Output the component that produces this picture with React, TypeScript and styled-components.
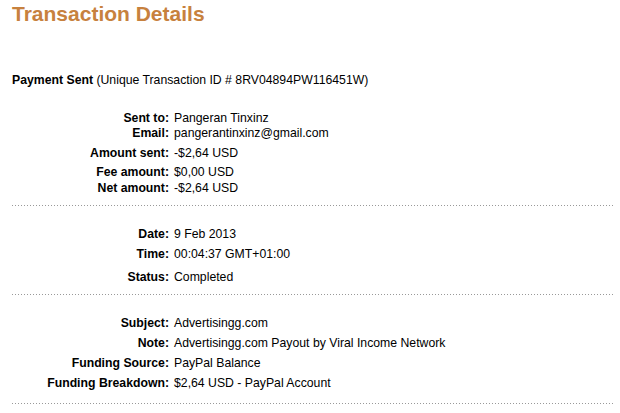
import React from "react";
import styled, { createGlobalStyle } from "styled-components";

const Global = createGlobalStyle`
  body {
    margin: 0;
    background: #fff;
    font-family: "Liberation Sans", Arial, sans-serif;
    font-size: 12.25px;
    color: #000;
  }
`;

const Page = styled.div`
  width: 620px;
  height: 413px;
  padding: 2px 6px 0 12px;
  box-sizing: border-box;
  overflow: hidden;
`;

const Title = styled.h1`
  margin: 0;
  font-size: 21px;
  line-height: 24px;
  font-weight: bold;
  color: #c7813e;
`;

const Summary = styled.div`
  margin-top: 47px;
  line-height: 15px;
`;

const Section = styled.div`
  display: grid;
  grid-template-columns: 157px 1fr;
  column-gap: 5px;
  padding-top: ${(p: { top: number }) => p.top}px;
`;

const Label = styled.div<{ gap?: number }>`
  text-align: right;
  font-weight: bold;
  line-height: 15px;
  margin-top: ${(p) => p.gap ?? 0}px;
`;

const Value = styled.div<{ gap?: number }>`
  line-height: 15px;
  margin-top: ${(p) => p.gap ?? 0}px;
`;

const Divider = styled.div`
  height: 1px;
  margin-top: ${(p: { top: number }) => p.top}px;
  background-image: linear-gradient(to right, #999 1px, transparent 1px);
  background-size: 3px 1px;
`;

type Row = [string, string, number];

const Rows = ({ rows }: { rows: Row[] }) => (
  <>
    {rows.map(([l, v, g]) => (
      <React.Fragment key={l}>
        <Label gap={g}>{l}</Label>
        <Value gap={g}>{v}</Value>
      </React.Fragment>
    ))}
  </>
);

export default function App() {
  return (
    <>
      <Global />
      <Page>
        <Title>Transaction Details</Title>
        <Summary>
          <b>Payment Sent</b> (Unique Transaction ID # 8RV04894PW116451W)
        </Summary>
        <Section top={23}>
          <Rows
            rows={[
              ["Sent to:", "Pangeran Tinxinz", 0],
              ["Email:", "pangerantinxinz@gmail.com", 0],
              ["Amount sent:", "-$2,64 USD", 5],
              ["Fee amount:", "$0,00 USD", 4],
              ["Net amount:", "-$2,64 USD", 1],
            ]}
          />
        </Section>
        <Divider top={9} />
        <Section top={21}>
          <Rows
            rows={[
              ["Date:", "9 Feb 2013", 0],
              ["Time:", "00:04:37 GMT+01:00", 5],
              ["Status:", "Completed", 8],
            ]}
          />
        </Section>
        <Divider top={9} />
        <Section top={21}>
          <Rows
            rows={[
              ["Subject:", "Advertisingg.com", 0],
              ["Note:", "Advertisingg.com Payout by Viral Income Network", 5],
              ["Funding Source:", "PayPal Balance", 5],
              ["Funding Breakdown:", "$2,64 USD - PayPal Account", 5],
            ]}
          />
        </Section>
        <Divider top={12} />
      </Page>
    </>
  );
}
